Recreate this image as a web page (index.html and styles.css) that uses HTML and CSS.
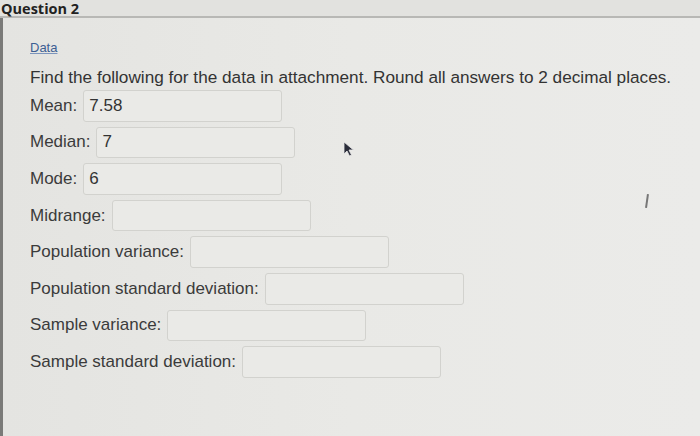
FILE: index.html
```html
<!DOCTYPE html>
<html>
<head>
<meta charset="utf-8">
<link rel="stylesheet" href="styles.css">
</head>
<body>
<div class="frame">
  <div class="header"><span class="title">Question 2</span></div>
  <div class="content">
    <a class="data-link" href="#">Data</a>
    <p class="prompt">Find the following for the data in attachment. Round all answers to 2 decimal places.</p>
    <div class="rows">
      <div class="row"><span class="label">Mean:</span><span class="box">7.58</span></div>
      <div class="row"><span class="label">Median:</span><span class="box">7</span></div>
      <div class="row"><span class="label">Mode:</span><span class="box">6</span></div>
      <div class="row"><span class="label">Midrange:</span><span class="box"></span></div>
      <div class="row"><span class="label">Population variance:</span><span class="box"></span></div>
      <div class="row"><span class="label">Population standard deviation:</span><span class="box"></span></div>
      <div class="row"><span class="label">Sample variance:</span><span class="box"></span></div>
      <div class="row"><span class="label">Sample standard deviation:</span><span class="box"></span></div>
    </div>
  </div>
  <svg class="cursor" width="12" height="16" viewBox="0 0 12 16"><path d="M1 1 L1 13 L4 10 L6.5 15 L8.5 14 L6 9 L10.5 9 Z" fill="#2b2d3a" stroke="#e8e8e8" stroke-width="0.8"/></svg>
  <div class="scratch"></div>
</div>
</body>
</html>
```
FILE: styles.css
```css
* { box-sizing: border-box; }
html, body { margin: 0; padding: 0; }
body {
  width: 700px;
  height: 436px;
  overflow: hidden;
  background: #e6e6e3;
  font-family: "Liberation Sans", Arial, sans-serif;
  color: #3b3b3b;
}
.frame {
  position: relative;
  height: 436px;
  border-left: 3px solid #7a7a78;
  background: linear-gradient(90deg, #e4e4e1 0%, #e9e9e6 50%, #ebebe9 100%);
}
.header {
  height: 18px;
  border-bottom: 2px solid #b8b8b5;
  background: #e2e2df;
  margin-left: -3px;
  padding: 1px 0 0 1px;
}
.title {
  font-family: "Open Sans", sans-serif;
  font-weight: 700;
  font-size: 14.5px;
  line-height: 16px;
  color: #222;
  display: block;
}
.content {
  padding-left: 27px;
  padding-top: 22px;
}
.data-link {
  display: block;
  font-size: 13px;
  line-height: 15px;
  color: #3d5f93;
  text-decoration: underline;
  text-decoration-color: #7c95bd;
}
.prompt {
  margin: 12px 0 0 0;
  font-size: 17.2px;
  line-height: 20px;
  color: #333;
}
.rows {
  margin-top: 3px;
  display: flex;
  flex-direction: column;
  gap: 5px;
}
.row {
  display: flex;
  align-items: center;
  gap: 6px;
  height: 31.6px;
  font-size: 17px;
}
.label { color: #3b3b3b; }
.box {
  width: 199px;
  height: 31.6px;
  border: 1.5px solid #d2d2ce;
  border-radius: 3px;
  background: #eaeae7;
  padding-left: 5px;
  display: flex;
  align-items: center;
  font-size: 17px;
  color: #333;
}
.cursor {
  position: absolute;
  left: 340px;
  top: 141px;
}
.scratch {
  position: absolute;
  left: 643px;
  top: 194px;
  width: 1.5px;
  height: 14px;
  background: #777;
  transform: rotate(8deg);
}
```
